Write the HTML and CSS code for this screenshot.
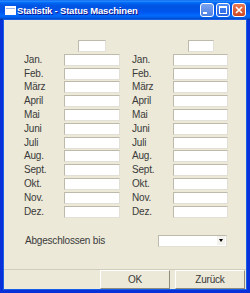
FILE: index.html
```html
<!DOCTYPE html>
<html lang="de">
<head>
    <meta charset="UTF-8">
    <title>Statistik - Status Maschinen</title>
    <link rel="stylesheet" href="styles.css">
</head>
<body>
    <div class="window">
        <div class="titlebar">
            <svg class="app-icon" width="11" height="9" viewBox="0 0 11 9">
                <rect x="0" y="0" width="11" height="9" fill="#fff"/>
                <rect x="1" y="2" width="9" height="1" fill="#9cb4ee"/>
            </svg>
            <span class="title">Statistik - Status Maschinen</span>
            <div class="title-buttons">
                <span class="tbtn min">
                    <svg width="12" height="12" viewBox="0 0 12 12"><rect x="2" y="8" width="4" height="2" fill="#fff"/></svg>
                </span>
                <span class="tbtn">
                    <svg width="12" height="12" viewBox="0 0 12 12"><rect x="2.5" y="2.5" width="7" height="7" fill="none" stroke="#fff"/><rect x="2" y="2" width="8" height="2" fill="#fff"/></svg>
                </span>
                <span class="tbtn close">
                    <svg width="12" height="12" viewBox="0 0 12 12"><path d="M3 3 L9 9 M9 3 L3 9" stroke="#fff" stroke-width="1.6"/></svg>
                </span>
            </div>
        </div>

        <div class="content">
            <div class="months">
                <span></span><input class="field year" type="text"><span></span><span></span><input class="field year right" type="text">

                <label>Jan.</label><input class="field" type="text"><span></span><label>Jan.</label><input class="field right" type="text">
                <label>Feb.</label><input class="field" type="text"><span></span><label>Feb.</label><input class="field right" type="text">
                <label>März</label><input class="field" type="text"><span></span><label>März</label><input class="field right" type="text">
                <label>April</label><input class="field" type="text"><span></span><label>April</label><input class="field right" type="text">
                <label>Mai</label><input class="field" type="text"><span></span><label>Mai</label><input class="field right" type="text">
                <label>Juni</label><input class="field" type="text"><span></span><label>Juni</label><input class="field right" type="text">
                <label>Juli</label><input class="field" type="text"><span></span><label>Juli</label><input class="field right" type="text">
                <label>Aug.</label><input class="field" type="text"><span></span><label>Aug.</label><input class="field right" type="text">
                <label>Sept.</label><input class="field" type="text"><span></span><label>Sept.</label><input class="field right" type="text">
                <label>Okt.</label><input class="field" type="text"><span></span><label>Okt.</label><input class="field right" type="text">
                <label>Nov.</label><input class="field" type="text"><span></span><label>Nov.</label><input class="field right" type="text">
                <label>Dez.</label><input class="field" type="text"><span></span><label>Dez.</label><input class="field right" type="text">
            </div>

            <div class="closed-row">
                <span>Abgeschlossen bis</span>
                <div class="select">
                    <span class="drop-btn"><span class="arrow"></span></span>
                </div>
            </div>

            <div class="footer">
                <button class="button">OK</button>
                <button class="button">Zurück</button>
            </div>
        </div>
    </div>
</body>
</html>
```

FILE: styles.css
```css
* {
    box-sizing: border-box;
}
body {
    margin: 0;
    width: 250px;
    height: 293px;
    font-family: "Liberation Sans", Arial, sans-serif;
    font-size: 10px;
    letter-spacing: -0.2px;
    color: #3a3a3a;
}
.window {
    width: 250px;
    height: 293px;
    display: flex;
    flex-direction: column;
    background-color: #0831d9;
}
.titlebar {
    height: 20px;
    display: flex;
    align-items: center;
    padding: 0 4px 0 5px;
    color: white;
    background: linear-gradient(to bottom, #0058ee 0%, #3593ff 5%, #127dff 9%, #036ffc 12%, #0262ee 18%, #0057e5 26%, #0054e3 35%, #0055eb 56%, #005bf5 66%, #026afe 76%, #0062ef 86%, #0052d6 92%, #0040ab 96%, #003092 100%);
}
.app-icon {
    margin-right: 1px;
}
.title {
    font-weight: bold;
    font-size: 9.5px;
    letter-spacing: -0.2px;
    text-shadow: 1px 1px #0f1089;
}
.title-buttons {
    margin-left: auto;
    display: flex;
    gap: 2px;
}
.tbtn {
    width: 14px;
    height: 14px;
    display: flex;
    align-items: center;
    justify-content: center;
    border: 1px solid white;
    border-radius: 3px;
    background: linear-gradient(to bottom, #4f8ef8, #2661e0);
}
.tbtn.min {
    background: linear-gradient(to bottom, #7da4f0, #4e7fe2);
}
.tbtn.close {
    background: linear-gradient(to bottom, #ec7a55, #cc4620);
}
.content {
    flex: 1;
    margin: 0 4px 4px;
    background-color: #ece9d8;
    display: flex;
    flex-direction: column;
    box-shadow: 0 0 0 1px #1a5de6;
}
.months {
    display: grid;
    grid-template-columns: 40px 56px 12px 41px 55px;
    grid-auto-rows: 12px;
    row-gap: 1.8px;
    padding: 20px 0 0 20px;
}
.months label {
    line-height: 12px;
}
.field {
    width: 56px;
    height: 12px;
    margin: 0;
    padding: 0;
    background-color: white;
    border: 1px solid;
    border-color: #bdbaab #e2e0d6 #e2e0d6 #bdbaab;
}
.field.right {
    width: 55px;
}
.field.year {
    width: 28px;
    justify-self: center;
}
.field.year.right {
    width: 26px;
}
.closed-row {
    height: 12px;
    margin-top: 17px;
    padding: 0 19px 0 21px;
    display: flex;
    align-items: center;
    justify-content: space-between;
}
.select {
    width: 69px;
    height: 12px;
    display: flex;
    align-items: center;
    justify-content: flex-end;
    padding-right: 1px;
    background-color: white;
    border: 1px solid;
    border-color: #bdbaab #e2e0d6 #e2e0d6 #bdbaab;
}
.drop-btn {
    width: 8px;
    height: 9px;
    display: flex;
    align-items: center;
    justify-content: center;
    background-color: #f3f2ec;
}
.arrow {
    border-left: 2.5px solid transparent;
    border-right: 2.5px solid transparent;
    border-top: 3px solid black;
}
.footer {
    margin-top: auto;
    height: 20px;
    display: flex;
    justify-content: flex-end;
    gap: 5px;
    padding-right: 1px;
    border-top: 1px solid #d0cdbe;
}
.button {
    width: 70px;
    height: 19px;
    padding: 0;
    font: inherit;
    letter-spacing: inherit;
    color: #3a3a3a;
    background-color: #ece9d8;
    border: 1px solid;
    border-color: white #8e8b7d #8e8b7d white;
}
```
